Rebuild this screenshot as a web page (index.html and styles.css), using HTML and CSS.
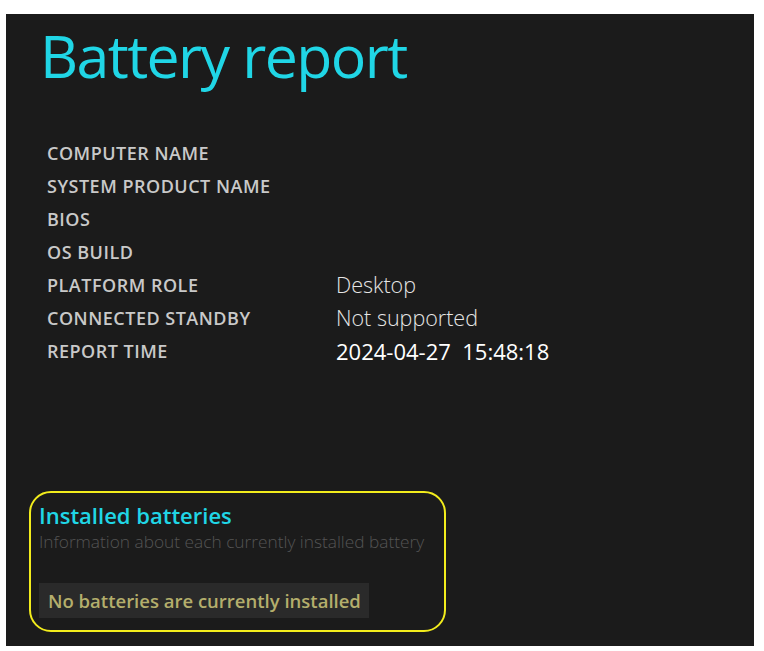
FILE: index.html
```html
<!DOCTYPE html>
<html>
<head>
<meta charset="utf-8">
<link rel="stylesheet" href="styles.css">
</head>
<body>
<div class="panel">
  <h1 class="title">Battery report</h1>
  <table class="info">
    <tr><td class="label">COMPUTER NAME</td><td class="value"></td></tr>
    <tr><td class="label">SYSTEM PRODUCT NAME</td><td class="value"></td></tr>
    <tr><td class="label">BIOS</td><td class="value"></td></tr>
    <tr><td class="label">OS BUILD</td><td class="value"></td></tr>
    <tr><td class="label">PLATFORM ROLE</td><td class="value">Desktop</td></tr>
    <tr><td class="label">CONNECTED STANDBY</td><td class="value">Not supported</td></tr>
    <tr><td class="label">REPORT TIME</td><td class="value strong">2024-04-27&nbsp; 15:48:18</td></tr>
  </table>
  <div class="highlight">
    <h2 class="section-title">Installed batteries</h2>
    <div class="section-sub">Information about each currently installed battery</div>
    <div class="notice">No batteries are currently installed</div>
  </div>
</div>
</body>
</html>
```

FILE: styles.css
```css
html, body {
  margin: 0;
  padding: 0;
  background: #ffffff;
}
body {
  padding: 14px 10px 5px 6px;
  font-family: "Open Sans", "Noto Sans", sans-serif;
}
.panel {
  background: #1b1b1b;
  width: 748px;
  height: 632px;
  box-sizing: border-box;
  padding: 6px 0 0 33px;
  display: flex;
  flex-direction: column;
  align-items: flex-start;
}
.title {
  margin: 0 0 0 1px;
  font-weight: 400;
  font-size: 59px;
  line-height: 70px;
  color: #20d6e6;
  letter-spacing: -1.6px;
}
.info {
  margin: 46px 0 0 8px;
  border-collapse: collapse;
}
.info td {
  padding: 0;
  height: 33px;
  vertical-align: middle;
  white-space: nowrap;
}
.label {
  width: 289px;
  font-size: 18px;
  font-weight: 600;
  letter-spacing: 0.5px;
  color: #c9c9c9;
}
.value {
  font-size: 21.5px;
  font-weight: 300;
  color: #e6e6e6;
}
.value.strong {
  font-size: 22px;
  font-weight: 400;
  color: #ffffff;
}
.highlight {
  margin-top: 124px;
  margin-left: -10px;
  width: 417px;
  height: 141px;
  box-sizing: border-box;
  border: 2px solid #f2ec1c;
  border-radius: 22px;
  padding: 8px 0 0 8px;
  display: flex;
  flex-direction: column;
  align-items: flex-start;
}
.section-title {
  margin: 0;
  font-size: 22px;
  font-weight: 600;
  line-height: 28px;
  color: #20d6e6;
}
.section-sub {
  font-size: 17.3px;
  font-weight: 300;
  color: #545454;
  line-height: 25px;
  white-space: nowrap;
}
.notice {
  margin-top: 29px;
  background: #2a2a2a;
  color: #b4ae6c;
  font-size: 18.5px;
  font-weight: 600;
  line-height: 25px;
  padding: 5px 8px 5px 9px;
}
```
